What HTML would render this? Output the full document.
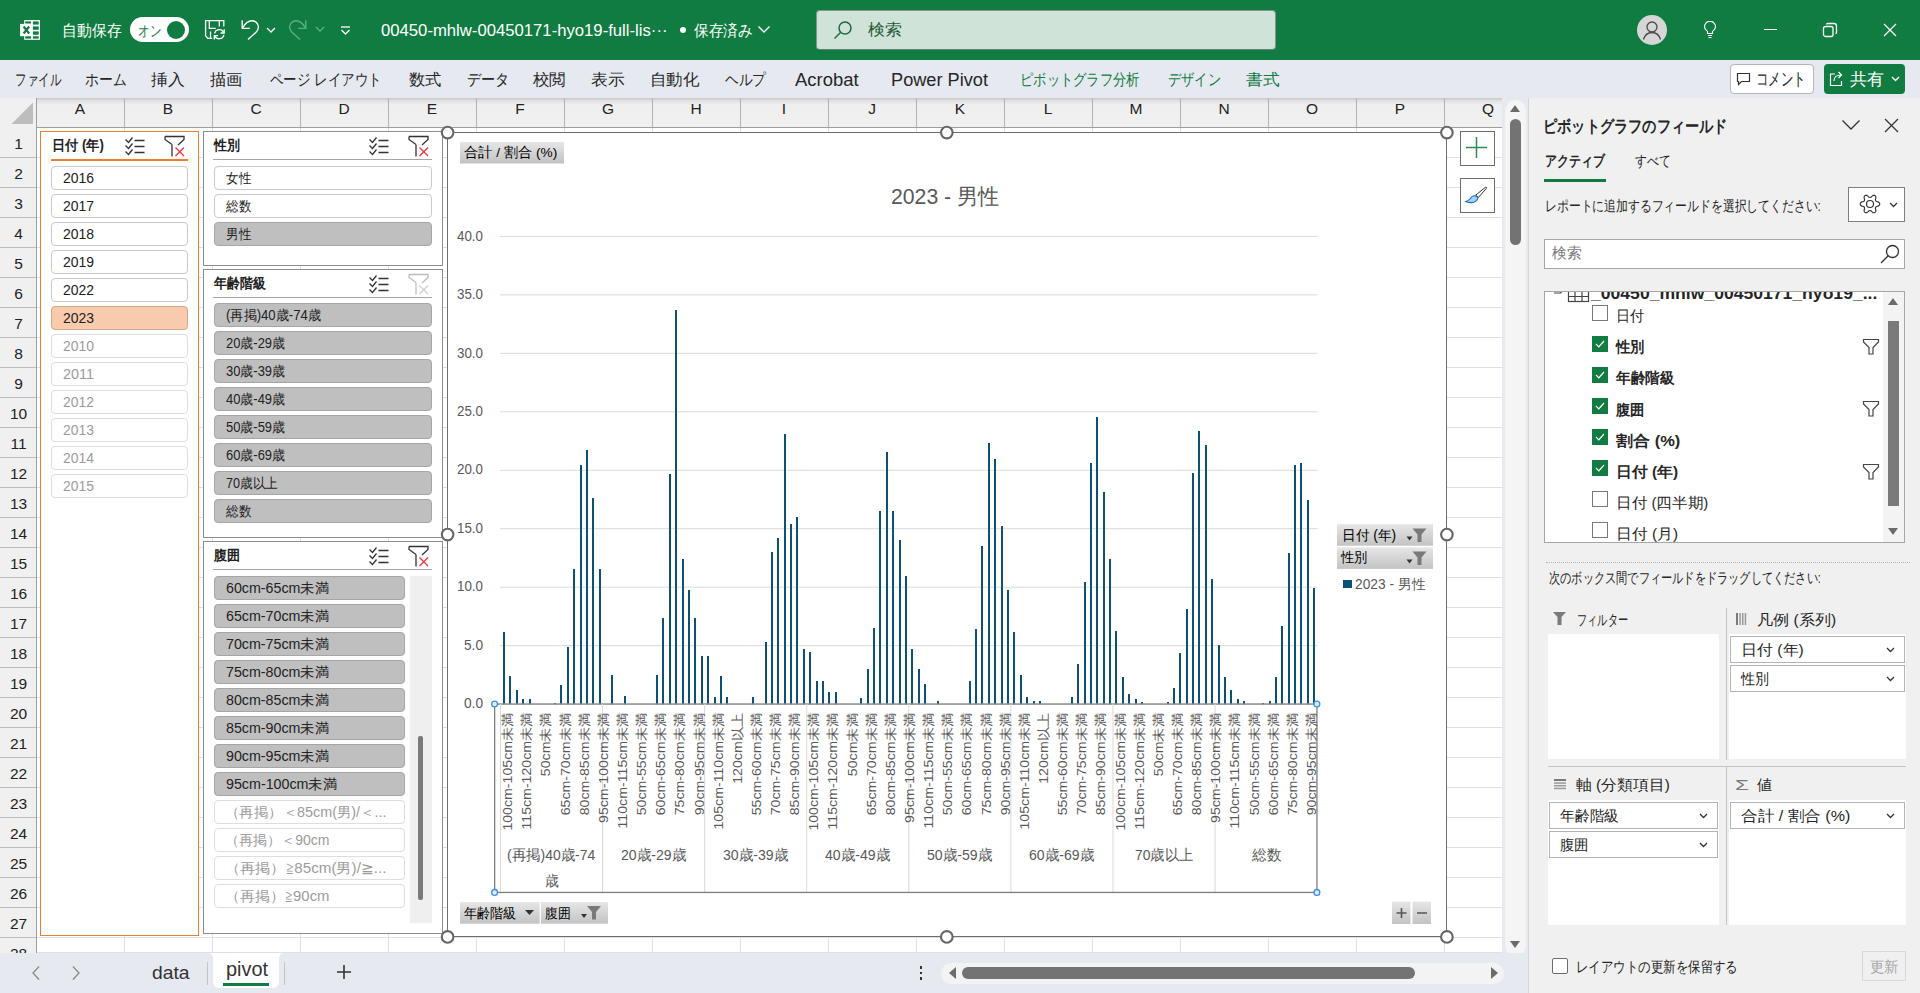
<!DOCTYPE html><html><head><meta charset="utf-8"><style>
*{margin:0;padding:0;box-sizing:border-box}
html,body{width:1920px;height:993px;overflow:hidden;background:#fff;font-family:"Liberation Sans",sans-serif;color:#222}
.ab{position:absolute}
.t{position:absolute;white-space:nowrap;line-height:1;transform-origin:0 50%}
</style></head><body>

<div class="ab" style="left:0;top:0;width:1920px;height:60px;background:#107c41"></div>
<svg class="ab" style="left:16px;top:16px" width="28" height="28" viewBox="0 0 28 28">
<rect x="8.2" y="4.1" width="15.8" height="19.7" fill="#fff"/>
<rect x="4.1" y="7.9" width="12" height="12.3" fill="#fff"/>
<g fill="#107c41"><rect x="16.9" y="5.4" width="5.8" height="3.2"/><rect x="16.9" y="10.4" width="5.8" height="3.4"/><rect x="16.9" y="15.4" width="5.8" height="3.35"/><rect x="16.9" y="20.3" width="5.8" height="2.3"/>
<rect x="9.2" y="5.4" width="5.8" height="2.1"/><rect x="9.2" y="20.3" width="5.8" height="2.3"/></g>
<path d="M7.6 10.5l5.6 7M13.2 10.5l-5.6 7" stroke="#107c41" stroke-width="2.1"/>
</svg>
<div class="t" style="left:61.50px;top:22.78px;font-size:16px;color:#fff;font-weight:normal;transform:scaleX(0.9297)">自動保存</div>
<div class="ab" style="left:130px;top:17px;width:59px;height:25px;border-radius:13px;background:#fff"></div>
<div class="t" style="left:137.50px;top:23.45px;font-size:15px;color:#107c41;font-weight:normal;transform:scaleX(0.7667)">オン</div>
<div class="ab" style="left:167px;top:21px;width:18px;height:18px;border-radius:50%;background:#107c41"></div>
<svg class="ab" style="left:204px;top:19px" width="24" height="24" viewBox="0 0 24 24" fill="none" stroke="#fff" stroke-width="1.3">
<path d="M1.6 10V1.6H19.8V7.5"/><path d="M1.6 9V16.8L3.8 19.4H8.2"/><path d="M5.3 2V9.3H11.8"/><path d="M15.3 2V7.5"/><path d="M6.5 12.5V19"/>
<path d="M10.6 14.4A4.8 4.8 0 0 1 19.6 13.2"/><path d="M20.2 10.2V14H16.6"/>
<path d="M19.9 15.8A4.8 4.8 0 0 1 10.8 16.9"/><path d="M10.3 20.6V16.6H13.9"/>
</svg>
<svg class="ab" style="left:239px;top:19px" width="22" height="23" viewBox="0 0 22 23" fill="none" stroke="#fff" stroke-width="1.4">
<path d="M3.2 1.2V9.4H10.8"/><path d="M3.6 9C6 4.5 9.5 1.8 13 1.8C16.8 1.8 19.4 4.8 19.4 8C19.4 10.2 18.5 11.8 17 13.3L9 20.5"/>
</svg>
<svg class="ab" style="left:266px;top:26.5px" width="10" height="7" viewBox="0 0 10 7" fill="none" stroke="#fff" stroke-width="1.3"><path d="M1 1l4 4 4-4"/></svg>
<svg class="ab" style="left:287px;top:19px" width="22" height="23" viewBox="0 0 22 23" fill="none" stroke="#5fae83" stroke-width="1.4">
<path d="M18.8 1.2V9.4H11.2"/><path d="M18.4 9C16 4.5 12.5 1.8 9 1.8C5.2 1.8 2.6 4.8 2.6 8C2.6 10.2 3.5 11.8 5 13.3L13 20.5"/>
</svg>
<svg class="ab" style="left:315px;top:26px" width="10" height="7" viewBox="0 0 10 7" fill="none" stroke="#5fae83" stroke-width="1.3"><path d="M1 1l4 4 4-4"/></svg>
<svg class="ab" style="left:340px;top:26px" width="11" height="10" viewBox="0 0 11 10" fill="none" stroke="#fff" stroke-width="1.3"><path d="M1 1h9"/><path d="M1.5 4l4 4 4-4"/></svg>
<div class="t" style="left:380.50px;top:22.98px;font-size:16px;color:#fff;font-weight:normal;transform:scaleX(1.0426)">00450-mhlw-00450171-hyo19-full-lis···</div>
<div class="ab" style="left:680px;top:27px;width:6px;height:6px;border-radius:50%;background:#fff"></div>
<div class="t" style="left:694.00px;top:22.98px;font-size:16px;color:#fff;font-weight:normal;transform:scaleX(0.9141)">保存済み</div>
<svg class="ab" style="left:757px;top:25px" width="14" height="9" viewBox="0 0 14 9" fill="none" stroke="#fff" stroke-width="1.4"><path d="M1.5 1.5l5.5 5.5 5.5-5.5"/></svg>
<div class="ab" style="left:816px;top:10px;width:460px;height:40px;border-radius:4px;background:#d0e3d8;border:1px solid #84968b;border-bottom:1.5px solid #6a7d72"></div>
<svg class="ab" style="left:833px;top:20px" width="20" height="20" viewBox="0 0 20 20" fill="none" stroke="#1c6b3f" stroke-width="1.5"><circle cx="12" cy="8" r="6"/><path d="M7.5 12.5L1.5 18.5"/></svg>
<div class="t" style="left:867.50px;top:22.48px;font-size:16px;color:#1d5a37;font-weight:normal;transform:scaleX(1.0625)">検索</div>
<div class="ab" style="left:1637px;top:15px;width:30px;height:30px;border-radius:50%;background:#d6d6d6"></div>
<svg class="ab" style="left:1637px;top:15px" width="30" height="30" viewBox="0 0 30 30" fill="none" stroke="#4a4a4a" stroke-width="1.3"><circle cx="15" cy="12" r="5"/><path d="M6.5 24.5c1.5-5 5-7 8.5-7s7 2 8.5 7"/></svg>
<svg class="ab" style="left:1703px;top:21px" width="14" height="18" viewBox="0 0 14 18" fill="none" stroke="#fff" stroke-width="1.2"><path d="M4.5 12.5v-2C2.5 9 1.5 7.5 1.5 5.8a5.5 5.5 0 0 1 11 0c0 1.7-1 3.2-3 4.7v2z"/><path d="M5 14.5h4M5.5 16.5h3"/></svg>
<div class="ab" style="left:1764px;top:29px;width:13px;height:1.4px;background:#fff"></div>
<svg class="ab" style="left:1822px;top:22px" width="16" height="16" viewBox="0 0 16 16" fill="none" stroke="#fff" stroke-width="1.3"><rect x="1.5" y="4.5" width="9.5" height="10" rx="2"/><path d="M4.5 2.5c0-.6.5-1 1-1h6.5c1.3 0 2.5 1.2 2.5 2.5v6.5c0 .6-.4 1-1 1"/></svg>
<svg class="ab" style="left:1883px;top:23px" width="14" height="14" viewBox="0 0 14 14" fill="none" stroke="#fff" stroke-width="1.3"><path d="M1 1l12 12M13 1L1 13"/></svg>
<div class="ab" style="left:0;top:60px;width:1920px;height:38px;background:#e6e9ef"></div>
<div class="t" style="left:15.00px;top:72.28px;font-size:16px;color:#262626;font-weight:normal;transform:scaleX(0.7188)">ファイル</div>
<div class="t" style="left:85.00px;top:72.28px;font-size:16px;color:#262626;font-weight:normal;transform:scaleX(0.8646)">ホーム</div>
<div class="t" style="left:151.00px;top:72.28px;font-size:16px;color:#262626;font-weight:normal;transform:scaleX(1.0469)">挿入</div>
<div class="t" style="left:210.00px;top:72.28px;font-size:16px;color:#262626;font-weight:normal;transform:scaleX(1.0156)">描画</div>
<div class="t" style="left:270.00px;top:72.28px;font-size:16px;color:#262626;font-weight:normal;transform:scaleX(0.8418)">ページ レイアウト</div>
<div class="t" style="left:409.00px;top:72.28px;font-size:16px;color:#262626;font-weight:normal;transform:scaleX(1.0156)">数式</div>
<div class="t" style="left:467.00px;top:72.28px;font-size:16px;color:#262626;font-weight:normal;transform:scaleX(0.8854)">データ</div>
<div class="t" style="left:533.00px;top:72.28px;font-size:16px;color:#262626;font-weight:normal;transform:scaleX(1.0312)">校閲</div>
<div class="t" style="left:591.00px;top:72.28px;font-size:16px;color:#262626;font-weight:normal;transform:scaleX(1.0469)">表示</div>
<div class="t" style="left:650.00px;top:72.28px;font-size:16px;color:#262626;font-weight:normal;transform:scaleX(1.0312)">自動化</div>
<div class="t" style="left:725.00px;top:72.28px;font-size:16px;color:#262626;font-weight:normal;transform:scaleX(0.8542)">ヘルプ</div>
<div class="t" style="left:794.50px;top:72.28px;font-size:17.5px;color:#262626;font-weight:normal;transform:scaleX(1.0528)">Acrobat</div>
<div class="t" style="left:891.00px;top:72.28px;font-size:17.5px;color:#262626;font-weight:normal;transform:scaleX(1.0388)">Power Pivot</div>
<div class="t" style="left:1019.50px;top:72.28px;font-size:16px;color:#107c41;font-weight:normal;transform:scaleX(0.8299)">ピボットグラフ分析</div>
<div class="t" style="left:1167.50px;top:72.28px;font-size:16px;color:#107c41;font-weight:normal;transform:scaleX(0.8281)">デザイン</div>
<div class="t" style="left:1246.00px;top:72.28px;font-size:16px;color:#107c41;font-weight:normal;transform:scaleX(1.0469)">書式</div>
<div class="ab" style="left:1730px;top:64px;width:84px;height:30px;border:1px solid #b5b5b5;border-radius:4px;background:#fff"></div>
<svg class="ab" style="left:1736px;top:72px" width="15" height="15" viewBox="0 0 15 15" fill="none" stroke="#333" stroke-width="1.2"><path d="M1.5 1.5h12v8h-8l-3 3v-3h-1z"/></svg>
<div class="t" style="left:1755.50px;top:71.28px;font-size:17.5px;color:#262626;font-weight:normal;transform:scaleX(0.6944)">コメント</div>
<div class="ab" style="left:1824px;top:64px;width:81px;height:30px;border-radius:4px;background:#107c41"></div>
<svg class="ab" style="left:1829px;top:70px" width="16" height="17" viewBox="0 0 16 17" fill="none" stroke="#fff" stroke-width="1.2"><path d="M6 4H1.5v11.5h11V11"/><path d="M5 11c0-4 3-6 7-6M9.5 2l3 3-3 3"/></svg>
<div class="t" style="left:1850.00px;top:71.01px;font-size:17px;color:#fff;font-weight:normal;transform:scaleX(1.0000)">共有</div>
<svg class="ab" style="left:1891px;top:76px" width="9" height="6" viewBox="0 0 9 6" fill="none" stroke="#fff" stroke-width="1.3"><path d="M1 1l3.5 3.5L8 1"/></svg>
<div class="ab" style="left:0;top:98px;width:1502px;height:855px;background:#fff"></div>
<div class="ab" style="left:0;top:98px;width:1502px;height:30px;background:linear-gradient(#c9c9c9 0px,#e3e3e3 3px,#efefef 7px,#f0f0f0 100%)"></div>
<div class="ab" style="left:0;top:127px;width:1502px;height:1px;background:#9e9e9e"></div>
<div class="ab" style="left:0;top:98px;width:37px;height:855px;background:#f0f0f0"></div>
<div class="ab" style="left:36px;top:98px;width:1px;height:855px;background:#9e9e9e"></div>
<svg class="ab" style="left:10px;top:101px" width="24" height="24" viewBox="0 0 24 24"><path d="M23 1.5V23H1.5z" fill="#bdbdbd"/></svg>
<div class="ab" style="left:124px;top:128px;width:1px;height:825px;background:#e0e0e0"></div>
<div class="ab" style="left:124px;top:98px;width:1px;height:29px;background:#b3b3b3"></div>
<div class="t" style="left:36px;width:88px;text-align:center;top:101px;font-size:15.5px;line-height:15px;color:#222">A</div>
<div class="ab" style="left:212px;top:128px;width:1px;height:825px;background:#e0e0e0"></div>
<div class="ab" style="left:212px;top:98px;width:1px;height:29px;background:#b3b3b3"></div>
<div class="t" style="left:124px;width:88px;text-align:center;top:101px;font-size:15.5px;line-height:15px;color:#222">B</div>
<div class="ab" style="left:300px;top:128px;width:1px;height:825px;background:#e0e0e0"></div>
<div class="ab" style="left:300px;top:98px;width:1px;height:29px;background:#b3b3b3"></div>
<div class="t" style="left:212px;width:88px;text-align:center;top:101px;font-size:15.5px;line-height:15px;color:#222">C</div>
<div class="ab" style="left:388px;top:128px;width:1px;height:825px;background:#e0e0e0"></div>
<div class="ab" style="left:388px;top:98px;width:1px;height:29px;background:#b3b3b3"></div>
<div class="t" style="left:300px;width:88px;text-align:center;top:101px;font-size:15.5px;line-height:15px;color:#222">D</div>
<div class="ab" style="left:476px;top:128px;width:1px;height:825px;background:#e0e0e0"></div>
<div class="ab" style="left:476px;top:98px;width:1px;height:29px;background:#b3b3b3"></div>
<div class="t" style="left:388px;width:88px;text-align:center;top:101px;font-size:15.5px;line-height:15px;color:#222">E</div>
<div class="ab" style="left:564px;top:128px;width:1px;height:825px;background:#e0e0e0"></div>
<div class="ab" style="left:564px;top:98px;width:1px;height:29px;background:#b3b3b3"></div>
<div class="t" style="left:476px;width:88px;text-align:center;top:101px;font-size:15.5px;line-height:15px;color:#222">F</div>
<div class="ab" style="left:652px;top:128px;width:1px;height:825px;background:#e0e0e0"></div>
<div class="ab" style="left:652px;top:98px;width:1px;height:29px;background:#b3b3b3"></div>
<div class="t" style="left:564px;width:88px;text-align:center;top:101px;font-size:15.5px;line-height:15px;color:#222">G</div>
<div class="ab" style="left:740px;top:128px;width:1px;height:825px;background:#e0e0e0"></div>
<div class="ab" style="left:740px;top:98px;width:1px;height:29px;background:#b3b3b3"></div>
<div class="t" style="left:652px;width:88px;text-align:center;top:101px;font-size:15.5px;line-height:15px;color:#222">H</div>
<div class="ab" style="left:828px;top:128px;width:1px;height:825px;background:#e0e0e0"></div>
<div class="ab" style="left:828px;top:98px;width:1px;height:29px;background:#b3b3b3"></div>
<div class="t" style="left:740px;width:88px;text-align:center;top:101px;font-size:15.5px;line-height:15px;color:#222">I</div>
<div class="ab" style="left:916px;top:128px;width:1px;height:825px;background:#e0e0e0"></div>
<div class="ab" style="left:916px;top:98px;width:1px;height:29px;background:#b3b3b3"></div>
<div class="t" style="left:828px;width:88px;text-align:center;top:101px;font-size:15.5px;line-height:15px;color:#222">J</div>
<div class="ab" style="left:1004px;top:128px;width:1px;height:825px;background:#e0e0e0"></div>
<div class="ab" style="left:1004px;top:98px;width:1px;height:29px;background:#b3b3b3"></div>
<div class="t" style="left:916px;width:88px;text-align:center;top:101px;font-size:15.5px;line-height:15px;color:#222">K</div>
<div class="ab" style="left:1092px;top:128px;width:1px;height:825px;background:#e0e0e0"></div>
<div class="ab" style="left:1092px;top:98px;width:1px;height:29px;background:#b3b3b3"></div>
<div class="t" style="left:1004px;width:88px;text-align:center;top:101px;font-size:15.5px;line-height:15px;color:#222">L</div>
<div class="ab" style="left:1180px;top:128px;width:1px;height:825px;background:#e0e0e0"></div>
<div class="ab" style="left:1180px;top:98px;width:1px;height:29px;background:#b3b3b3"></div>
<div class="t" style="left:1092px;width:88px;text-align:center;top:101px;font-size:15.5px;line-height:15px;color:#222">M</div>
<div class="ab" style="left:1268px;top:128px;width:1px;height:825px;background:#e0e0e0"></div>
<div class="ab" style="left:1268px;top:98px;width:1px;height:29px;background:#b3b3b3"></div>
<div class="t" style="left:1180px;width:88px;text-align:center;top:101px;font-size:15.5px;line-height:15px;color:#222">N</div>
<div class="ab" style="left:1356px;top:128px;width:1px;height:825px;background:#e0e0e0"></div>
<div class="ab" style="left:1356px;top:98px;width:1px;height:29px;background:#b3b3b3"></div>
<div class="t" style="left:1268px;width:88px;text-align:center;top:101px;font-size:15.5px;line-height:15px;color:#222">O</div>
<div class="ab" style="left:1444px;top:128px;width:1px;height:825px;background:#e0e0e0"></div>
<div class="ab" style="left:1444px;top:98px;width:1px;height:29px;background:#b3b3b3"></div>
<div class="t" style="left:1356px;width:88px;text-align:center;top:101px;font-size:15.5px;line-height:15px;color:#222">P</div>
<div class="ab" style="left:1532px;top:128px;width:1px;height:825px;background:#e0e0e0"></div>
<div class="ab" style="left:1532px;top:98px;width:1px;height:29px;background:#b3b3b3"></div>
<div class="t" style="left:1444px;width:88px;text-align:center;top:101px;font-size:15.5px;line-height:15px;color:#222">Q</div>
<div class="ab" style="left:37px;top:157px;width:1465px;height:1px;background:#e0e0e0"></div>
<div class="ab" style="left:0;top:157px;width:36px;height:1px;background:#bdbdbd"></div>
<div class="t" style="left:0;width:37px;text-align:center;top:136px;font-size:15.5px;line-height:15px;color:#222">1</div>
<div class="ab" style="left:37px;top:187px;width:1465px;height:1px;background:#e0e0e0"></div>
<div class="ab" style="left:0;top:187px;width:36px;height:1px;background:#bdbdbd"></div>
<div class="t" style="left:0;width:37px;text-align:center;top:166px;font-size:15.5px;line-height:15px;color:#222">2</div>
<div class="ab" style="left:37px;top:217px;width:1465px;height:1px;background:#e0e0e0"></div>
<div class="ab" style="left:0;top:217px;width:36px;height:1px;background:#bdbdbd"></div>
<div class="t" style="left:0;width:37px;text-align:center;top:196px;font-size:15.5px;line-height:15px;color:#222">3</div>
<div class="ab" style="left:37px;top:247px;width:1465px;height:1px;background:#e0e0e0"></div>
<div class="ab" style="left:0;top:247px;width:36px;height:1px;background:#bdbdbd"></div>
<div class="t" style="left:0;width:37px;text-align:center;top:226px;font-size:15.5px;line-height:15px;color:#222">4</div>
<div class="ab" style="left:37px;top:277px;width:1465px;height:1px;background:#e0e0e0"></div>
<div class="ab" style="left:0;top:277px;width:36px;height:1px;background:#bdbdbd"></div>
<div class="t" style="left:0;width:37px;text-align:center;top:256px;font-size:15.5px;line-height:15px;color:#222">5</div>
<div class="ab" style="left:37px;top:307px;width:1465px;height:1px;background:#e0e0e0"></div>
<div class="ab" style="left:0;top:307px;width:36px;height:1px;background:#bdbdbd"></div>
<div class="t" style="left:0;width:37px;text-align:center;top:286px;font-size:15.5px;line-height:15px;color:#222">6</div>
<div class="ab" style="left:37px;top:337px;width:1465px;height:1px;background:#e0e0e0"></div>
<div class="ab" style="left:0;top:337px;width:36px;height:1px;background:#bdbdbd"></div>
<div class="t" style="left:0;width:37px;text-align:center;top:316px;font-size:15.5px;line-height:15px;color:#222">7</div>
<div class="ab" style="left:37px;top:367px;width:1465px;height:1px;background:#e0e0e0"></div>
<div class="ab" style="left:0;top:367px;width:36px;height:1px;background:#bdbdbd"></div>
<div class="t" style="left:0;width:37px;text-align:center;top:346px;font-size:15.5px;line-height:15px;color:#222">8</div>
<div class="ab" style="left:37px;top:397px;width:1465px;height:1px;background:#e0e0e0"></div>
<div class="ab" style="left:0;top:397px;width:36px;height:1px;background:#bdbdbd"></div>
<div class="t" style="left:0;width:37px;text-align:center;top:376px;font-size:15.5px;line-height:15px;color:#222">9</div>
<div class="ab" style="left:37px;top:427px;width:1465px;height:1px;background:#e0e0e0"></div>
<div class="ab" style="left:0;top:427px;width:36px;height:1px;background:#bdbdbd"></div>
<div class="t" style="left:0;width:37px;text-align:center;top:406px;font-size:15.5px;line-height:15px;color:#222">10</div>
<div class="ab" style="left:37px;top:457px;width:1465px;height:1px;background:#e0e0e0"></div>
<div class="ab" style="left:0;top:457px;width:36px;height:1px;background:#bdbdbd"></div>
<div class="t" style="left:0;width:37px;text-align:center;top:436px;font-size:15.5px;line-height:15px;color:#222">11</div>
<div class="ab" style="left:37px;top:487px;width:1465px;height:1px;background:#e0e0e0"></div>
<div class="ab" style="left:0;top:487px;width:36px;height:1px;background:#bdbdbd"></div>
<div class="t" style="left:0;width:37px;text-align:center;top:466px;font-size:15.5px;line-height:15px;color:#222">12</div>
<div class="ab" style="left:37px;top:517px;width:1465px;height:1px;background:#e0e0e0"></div>
<div class="ab" style="left:0;top:517px;width:36px;height:1px;background:#bdbdbd"></div>
<div class="t" style="left:0;width:37px;text-align:center;top:496px;font-size:15.5px;line-height:15px;color:#222">13</div>
<div class="ab" style="left:37px;top:547px;width:1465px;height:1px;background:#e0e0e0"></div>
<div class="ab" style="left:0;top:547px;width:36px;height:1px;background:#bdbdbd"></div>
<div class="t" style="left:0;width:37px;text-align:center;top:526px;font-size:15.5px;line-height:15px;color:#222">14</div>
<div class="ab" style="left:37px;top:577px;width:1465px;height:1px;background:#e0e0e0"></div>
<div class="ab" style="left:0;top:577px;width:36px;height:1px;background:#bdbdbd"></div>
<div class="t" style="left:0;width:37px;text-align:center;top:556px;font-size:15.5px;line-height:15px;color:#222">15</div>
<div class="ab" style="left:37px;top:607px;width:1465px;height:1px;background:#e0e0e0"></div>
<div class="ab" style="left:0;top:607px;width:36px;height:1px;background:#bdbdbd"></div>
<div class="t" style="left:0;width:37px;text-align:center;top:586px;font-size:15.5px;line-height:15px;color:#222">16</div>
<div class="ab" style="left:37px;top:637px;width:1465px;height:1px;background:#e0e0e0"></div>
<div class="ab" style="left:0;top:637px;width:36px;height:1px;background:#bdbdbd"></div>
<div class="t" style="left:0;width:37px;text-align:center;top:616px;font-size:15.5px;line-height:15px;color:#222">17</div>
<div class="ab" style="left:37px;top:667px;width:1465px;height:1px;background:#e0e0e0"></div>
<div class="ab" style="left:0;top:667px;width:36px;height:1px;background:#bdbdbd"></div>
<div class="t" style="left:0;width:37px;text-align:center;top:646px;font-size:15.5px;line-height:15px;color:#222">18</div>
<div class="ab" style="left:37px;top:697px;width:1465px;height:1px;background:#e0e0e0"></div>
<div class="ab" style="left:0;top:697px;width:36px;height:1px;background:#bdbdbd"></div>
<div class="t" style="left:0;width:37px;text-align:center;top:676px;font-size:15.5px;line-height:15px;color:#222">19</div>
<div class="ab" style="left:37px;top:727px;width:1465px;height:1px;background:#e0e0e0"></div>
<div class="ab" style="left:0;top:727px;width:36px;height:1px;background:#bdbdbd"></div>
<div class="t" style="left:0;width:37px;text-align:center;top:706px;font-size:15.5px;line-height:15px;color:#222">20</div>
<div class="ab" style="left:37px;top:757px;width:1465px;height:1px;background:#e0e0e0"></div>
<div class="ab" style="left:0;top:757px;width:36px;height:1px;background:#bdbdbd"></div>
<div class="t" style="left:0;width:37px;text-align:center;top:736px;font-size:15.5px;line-height:15px;color:#222">21</div>
<div class="ab" style="left:37px;top:787px;width:1465px;height:1px;background:#e0e0e0"></div>
<div class="ab" style="left:0;top:787px;width:36px;height:1px;background:#bdbdbd"></div>
<div class="t" style="left:0;width:37px;text-align:center;top:766px;font-size:15.5px;line-height:15px;color:#222">22</div>
<div class="ab" style="left:37px;top:817px;width:1465px;height:1px;background:#e0e0e0"></div>
<div class="ab" style="left:0;top:817px;width:36px;height:1px;background:#bdbdbd"></div>
<div class="t" style="left:0;width:37px;text-align:center;top:796px;font-size:15.5px;line-height:15px;color:#222">23</div>
<div class="ab" style="left:37px;top:847px;width:1465px;height:1px;background:#e0e0e0"></div>
<div class="ab" style="left:0;top:847px;width:36px;height:1px;background:#bdbdbd"></div>
<div class="t" style="left:0;width:37px;text-align:center;top:826px;font-size:15.5px;line-height:15px;color:#222">24</div>
<div class="ab" style="left:37px;top:877px;width:1465px;height:1px;background:#e0e0e0"></div>
<div class="ab" style="left:0;top:877px;width:36px;height:1px;background:#bdbdbd"></div>
<div class="t" style="left:0;width:37px;text-align:center;top:856px;font-size:15.5px;line-height:15px;color:#222">25</div>
<div class="ab" style="left:37px;top:907px;width:1465px;height:1px;background:#e0e0e0"></div>
<div class="ab" style="left:0;top:907px;width:36px;height:1px;background:#bdbdbd"></div>
<div class="t" style="left:0;width:37px;text-align:center;top:886px;font-size:15.5px;line-height:15px;color:#222">26</div>
<div class="ab" style="left:37px;top:937px;width:1465px;height:1px;background:#e0e0e0"></div>
<div class="ab" style="left:0;top:937px;width:36px;height:1px;background:#bdbdbd"></div>
<div class="t" style="left:0;width:37px;text-align:center;top:916px;font-size:15.5px;line-height:15px;color:#222">27</div>
<div class="t" style="left:0;width:37px;text-align:center;top:946px;font-size:15.5px;line-height:15px;color:#222">28</div>
<div class="ab" style="left:40px;top:131px;width:159px;height:805px;background:#fff;border:1.5px solid #ed7d31"></div>
<div class="t" style="left:51.50px;top:138.42px;font-size:14px;color:#222;font-weight:bold;transform:scaleX(0.9417)">日付 (年)</div>
<svg class="ab" style="left:124px;top:136px" width="22" height="20" viewBox="0 0 22 20" fill="none" stroke="#333" stroke-width="1.3">
<path d="M1.5 3.5l3 3 4-5M1.5 9.5l3 3 4-5M1.5 15.5l3 3 4-5"/><path d="M10.5 4.5h10M10.5 10.5h10M10.5 16.5h10"/></svg>
<svg class="ab" style="left:162.5px;top:134px" width="24" height="24" viewBox="0 0 24 24" fill="none" stroke-width="1.3">
<path d="M2 2.5h19v3l-6 5.5M9 10.5v12" stroke="#333"/><path d="M2 2.5v3l7 5" stroke="#333"/><path d="M12.5 13.5l8.5 8.5M21 13.5l-8.5 8.5" stroke="#e8383d"/></svg>
<div class="ab" style="left:51px;top:159px;width:137px;height:1.6px;background:#ed7d31"></div>
<div class="ab" style="left:51px;top:166px;width:137px;height:24px;border-radius:4px;background:#fff;border:1px solid #cacaca"></div>
<div class="t" style="left:62.50px;top:171.42px;font-size:14px;color:#222;font-weight:normal;transform:scaleX(0.9950)">2016</div>
<div class="ab" style="left:51px;top:194px;width:137px;height:24px;border-radius:4px;background:#fff;border:1px solid #cacaca"></div>
<div class="t" style="left:62.50px;top:199.42px;font-size:14px;color:#222;font-weight:normal;transform:scaleX(0.9950)">2017</div>
<div class="ab" style="left:51px;top:222px;width:137px;height:24px;border-radius:4px;background:#fff;border:1px solid #cacaca"></div>
<div class="t" style="left:62.50px;top:227.42px;font-size:14px;color:#222;font-weight:normal;transform:scaleX(0.9950)">2018</div>
<div class="ab" style="left:51px;top:250px;width:137px;height:24px;border-radius:4px;background:#fff;border:1px solid #cacaca"></div>
<div class="t" style="left:62.50px;top:255.42px;font-size:14px;color:#222;font-weight:normal;transform:scaleX(0.9950)">2019</div>
<div class="ab" style="left:51px;top:278px;width:137px;height:24px;border-radius:4px;background:#fff;border:1px solid #cacaca"></div>
<div class="t" style="left:62.50px;top:283.42px;font-size:14px;color:#222;font-weight:normal;transform:scaleX(0.9950)">2022</div>
<div class="ab" style="left:51px;top:306px;width:137px;height:24px;border-radius:4px;background:#f8cbad;border:1px solid #d4a88a"></div>
<div class="t" style="left:62.50px;top:311.42px;font-size:14px;color:#222;font-weight:normal;transform:scaleX(0.9950)">2023</div>
<div class="ab" style="left:51px;top:334px;width:137px;height:24px;border-radius:4px;background:#fff;border:1px solid #dedede"></div>
<div class="t" style="left:62.50px;top:339.42px;font-size:14px;color:#9b9b9b;font-weight:normal;transform:scaleX(0.9950)">2010</div>
<div class="ab" style="left:51px;top:362px;width:137px;height:24px;border-radius:4px;background:#fff;border:1px solid #dedede"></div>
<div class="t" style="left:62.50px;top:367.42px;font-size:14px;color:#9b9b9b;font-weight:normal;transform:scaleX(1.0296)">2011</div>
<div class="ab" style="left:51px;top:390px;width:137px;height:24px;border-radius:4px;background:#fff;border:1px solid #dedede"></div>
<div class="t" style="left:62.50px;top:395.42px;font-size:14px;color:#9b9b9b;font-weight:normal;transform:scaleX(0.9950)">2012</div>
<div class="ab" style="left:51px;top:418px;width:137px;height:24px;border-radius:4px;background:#fff;border:1px solid #dedede"></div>
<div class="t" style="left:62.50px;top:423.42px;font-size:14px;color:#9b9b9b;font-weight:normal;transform:scaleX(0.9950)">2013</div>
<div class="ab" style="left:51px;top:446px;width:137px;height:24px;border-radius:4px;background:#fff;border:1px solid #dedede"></div>
<div class="t" style="left:62.50px;top:451.42px;font-size:14px;color:#9b9b9b;font-weight:normal;transform:scaleX(0.9950)">2014</div>
<div class="ab" style="left:51px;top:474px;width:137px;height:24px;border-radius:4px;background:#fff;border:1px solid #dedede"></div>
<div class="t" style="left:62.50px;top:479.42px;font-size:14px;color:#9b9b9b;font-weight:normal;transform:scaleX(0.9950)">2015</div>
<div class="ab" style="left:203px;top:131px;width:240px;height:135px;background:#fff;border:1.3px solid #8c8c8c"></div>
<div class="t" style="left:213.50px;top:138.42px;font-size:14px;color:#222;font-weight:bold;transform:scaleX(0.9286)">性別</div>
<svg class="ab" style="left:368px;top:136px" width="22" height="20" viewBox="0 0 22 20" fill="none" stroke="#333" stroke-width="1.3">
<path d="M1.5 3.5l3 3 4-5M1.5 9.5l3 3 4-5M1.5 15.5l3 3 4-5"/><path d="M10.5 4.5h10M10.5 10.5h10M10.5 16.5h10"/></svg>
<svg class="ab" style="left:406.5px;top:134px" width="24" height="24" viewBox="0 0 24 24" fill="none" stroke-width="1.3">
<path d="M2 2.5h19v3l-6 5.5M9 10.5v12" stroke="#333"/><path d="M2 2.5v3l7 5" stroke="#333"/><path d="M12.5 13.5l8.5 8.5M21 13.5l-8.5 8.5" stroke="#e8383d"/></svg>
<div class="ab" style="left:213px;top:159px;width:219px;height:1.2px;background:#a6a6a6"></div>
<div class="ab" style="left:214px;top:166px;width:218px;height:24px;border-radius:4px;background:#fff;border:1px solid #cacaca"></div>
<div class="t" style="left:225.50px;top:171.42px;font-size:14px;color:#222;font-weight:normal;transform:scaleX(0.8929)">女性</div>
<div class="ab" style="left:214px;top:194px;width:218px;height:24px;border-radius:4px;background:#fff;border:1px solid #cacaca"></div>
<div class="t" style="left:225.50px;top:199.42px;font-size:14px;color:#222;font-weight:normal;transform:scaleX(0.8929)">総数</div>
<div class="ab" style="left:214px;top:222px;width:218px;height:24px;border-radius:4px;background:#bfbfbf;border:1px solid #a6a6a6"></div>
<div class="t" style="left:225.50px;top:227.42px;font-size:14px;color:#222;font-weight:normal;transform:scaleX(0.8929)">男性</div>
<div class="ab" style="left:203px;top:269px;width:240px;height:269px;background:#fff;border:1.3px solid #8c8c8c"></div>
<div class="t" style="left:213.50px;top:276.42px;font-size:14px;color:#222;font-weight:bold;transform:scaleX(0.9286)">年齢階級</div>
<svg class="ab" style="left:368px;top:274px" width="22" height="20" viewBox="0 0 22 20" fill="none" stroke="#333" stroke-width="1.3">
<path d="M1.5 3.5l3 3 4-5M1.5 9.5l3 3 4-5M1.5 15.5l3 3 4-5"/><path d="M10.5 4.5h10M10.5 10.5h10M10.5 16.5h10"/></svg>
<svg class="ab" style="left:406.5px;top:272px" width="24" height="24" viewBox="0 0 24 24" fill="none" stroke-width="1.3">
<path d="M2 2.5h19v3l-6 5.5M9 10.5v12" stroke="#bdbdbd"/><path d="M2 2.5v3l7 5" stroke="#bdbdbd"/><path d="M12.5 13.5l8.5 8.5M21 13.5l-8.5 8.5" stroke="#cfcfcf"/></svg>
<div class="ab" style="left:213px;top:297px;width:219px;height:1.2px;background:#a6a6a6"></div>
<div class="ab" style="left:214px;top:303px;width:218px;height:24px;border-radius:4px;background:#bfbfbf;border:1px solid #a6a6a6"></div>
<div class="t" style="left:225.50px;top:308.42px;font-size:14px;color:#222;font-weight:normal;transform:scaleX(0.9393)">(再掲)40歳-74歳</div>
<div class="ab" style="left:214px;top:331px;width:218px;height:24px;border-radius:4px;background:#bfbfbf;border:1px solid #a6a6a6"></div>
<div class="t" style="left:225.50px;top:336.42px;font-size:14px;color:#222;font-weight:normal;transform:scaleX(0.9246)">20歳-29歳</div>
<div class="ab" style="left:214px;top:359px;width:218px;height:24px;border-radius:4px;background:#bfbfbf;border:1px solid #a6a6a6"></div>
<div class="t" style="left:225.50px;top:364.42px;font-size:14px;color:#222;font-weight:normal;transform:scaleX(0.9246)">30歳-39歳</div>
<div class="ab" style="left:214px;top:387px;width:218px;height:24px;border-radius:4px;background:#bfbfbf;border:1px solid #a6a6a6"></div>
<div class="t" style="left:225.50px;top:392.42px;font-size:14px;color:#222;font-weight:normal;transform:scaleX(0.9246)">40歳-49歳</div>
<div class="ab" style="left:214px;top:415px;width:218px;height:24px;border-radius:4px;background:#bfbfbf;border:1px solid #a6a6a6"></div>
<div class="t" style="left:225.50px;top:420.42px;font-size:14px;color:#222;font-weight:normal;transform:scaleX(0.9246)">50歳-59歳</div>
<div class="ab" style="left:214px;top:443px;width:218px;height:24px;border-radius:4px;background:#bfbfbf;border:1px solid #a6a6a6"></div>
<div class="t" style="left:225.50px;top:448.42px;font-size:14px;color:#222;font-weight:normal;transform:scaleX(0.9246)">60歳-69歳</div>
<div class="ab" style="left:214px;top:471px;width:218px;height:24px;border-radius:4px;background:#bfbfbf;border:1px solid #a6a6a6"></div>
<div class="t" style="left:225.50px;top:476.42px;font-size:14px;color:#222;font-weight:normal;transform:scaleX(0.9031)">70歳以上</div>
<div class="ab" style="left:214px;top:499px;width:218px;height:24px;border-radius:4px;background:#bfbfbf;border:1px solid #a6a6a6"></div>
<div class="t" style="left:225.50px;top:504.42px;font-size:14px;color:#222;font-weight:normal;transform:scaleX(0.9000)">総数</div>
<div class="ab" style="left:203px;top:541px;width:240px;height:393px;background:#fff;border:1.3px solid #8c8c8c"></div>
<div class="t" style="left:213.50px;top:548.42px;font-size:14px;color:#222;font-weight:bold;transform:scaleX(0.9286)">腹囲</div>
<svg class="ab" style="left:368px;top:546px" width="22" height="20" viewBox="0 0 22 20" fill="none" stroke="#333" stroke-width="1.3">
<path d="M1.5 3.5l3 3 4-5M1.5 9.5l3 3 4-5M1.5 15.5l3 3 4-5"/><path d="M10.5 4.5h10M10.5 10.5h10M10.5 16.5h10"/></svg>
<svg class="ab" style="left:406.5px;top:544px" width="24" height="24" viewBox="0 0 24 24" fill="none" stroke-width="1.3">
<path d="M2 2.5h19v3l-6 5.5M9 10.5v12" stroke="#333"/><path d="M2 2.5v3l7 5" stroke="#333"/><path d="M12.5 13.5l8.5 8.5M21 13.5l-8.5 8.5" stroke="#e8383d"/></svg>
<div class="ab" style="left:213px;top:569px;width:219px;height:1.2px;background:#a6a6a6"></div>
<div class="ab" style="left:214px;top:576px;width:191px;height:24px;border-radius:4px;background:#bfbfbf;border:1px solid #a6a6a6"></div>
<div class="t" style="left:225.50px;top:581.42px;font-size:14px;color:#222;font-weight:normal;transform:scaleX(1.0184)">60cm-65cm未満</div>
<div class="ab" style="left:214px;top:604px;width:191px;height:24px;border-radius:4px;background:#bfbfbf;border:1px solid #a6a6a6"></div>
<div class="t" style="left:225.50px;top:609.42px;font-size:14px;color:#222;font-weight:normal;transform:scaleX(1.0184)">65cm-70cm未満</div>
<div class="ab" style="left:214px;top:632px;width:191px;height:24px;border-radius:4px;background:#bfbfbf;border:1px solid #a6a6a6"></div>
<div class="t" style="left:225.50px;top:637.42px;font-size:14px;color:#222;font-weight:normal;transform:scaleX(1.0184)">70cm-75cm未満</div>
<div class="ab" style="left:214px;top:660px;width:191px;height:24px;border-radius:4px;background:#bfbfbf;border:1px solid #a6a6a6"></div>
<div class="t" style="left:225.50px;top:665.42px;font-size:14px;color:#222;font-weight:normal;transform:scaleX(1.0184)">75cm-80cm未満</div>
<div class="ab" style="left:214px;top:688px;width:191px;height:24px;border-radius:4px;background:#bfbfbf;border:1px solid #a6a6a6"></div>
<div class="t" style="left:225.50px;top:693.42px;font-size:14px;color:#222;font-weight:normal;transform:scaleX(1.0184)">80cm-85cm未満</div>
<div class="ab" style="left:214px;top:716px;width:191px;height:24px;border-radius:4px;background:#bfbfbf;border:1px solid #a6a6a6"></div>
<div class="t" style="left:225.50px;top:721.42px;font-size:14px;color:#222;font-weight:normal;transform:scaleX(1.0184)">85cm-90cm未満</div>
<div class="ab" style="left:214px;top:744px;width:191px;height:24px;border-radius:4px;background:#bfbfbf;border:1px solid #a6a6a6"></div>
<div class="t" style="left:225.50px;top:749.42px;font-size:14px;color:#222;font-weight:normal;transform:scaleX(1.0184)">90cm-95cm未満</div>
<div class="ab" style="left:214px;top:772px;width:191px;height:24px;border-radius:4px;background:#bfbfbf;border:1px solid #a6a6a6"></div>
<div class="t" style="left:225.50px;top:777.42px;font-size:14px;color:#222;font-weight:normal;transform:scaleX(1.0191)">95cm-100cm未満</div>
<div class="ab" style="left:214px;top:800px;width:191px;height:24px;border-radius:4px;background:#fff;border:1px solid #dedede"></div>
<div class="t" style="left:225.00px;top:805.42px;font-size:14px;color:#9b9b9b;font-weight:normal;transform:scaleX(1.0278)">（再掲）＜85cm(男)/＜...</div>
<div class="ab" style="left:214px;top:828px;width:191px;height:24px;border-radius:4px;background:#fff;border:1px solid #dedede"></div>
<div class="t" style="left:225.00px;top:833.42px;font-size:14px;color:#9b9b9b;font-weight:normal;transform:scaleX(1.0025)">（再掲）＜90cm</div>
<div class="ab" style="left:214px;top:856px;width:191px;height:24px;border-radius:4px;background:#fff;border:1px solid #dedede"></div>
<div class="t" style="left:225.00px;top:861.42px;font-size:14px;color:#9b9b9b;font-weight:normal;transform:scaleX(1.0830)">（再掲）≧85cm(男)/≧...</div>
<div class="ab" style="left:214px;top:884px;width:191px;height:24px;border-radius:4px;background:#fff;border:1px solid #dedede"></div>
<div class="t" style="left:225.00px;top:889.42px;font-size:14px;color:#9b9b9b;font-weight:normal;transform:scaleX(1.0638)">（再掲）≧90cm</div>
<div class="ab" style="left:410px;top:576px;width:22px;height:347px;background:#efefef"></div>
<div class="ab" style="left:418px;top:736px;width:5px;height:164px;border-radius:2px;background:#7a7a7a"></div>
<div class="ab" style="left:447.0px;top:132.0px;width:1000.0px;height:805.0px;background:#fff;border:1px solid #6e6e6e"></div>
<div class="ab" style="left:1460px;top:131px;width:35px;height:35px;background:#fff;border:1px solid #6e6e6e"></div>
<svg class="ab" style="left:1460px;top:131px" width="35" height="35" viewBox="0 0 35 35" fill="none" stroke="#2e8b57" stroke-width="1.5"><path d="M16.5 6v21M6 16.5h21"/></svg>
<div class="ab" style="left:1460px;top:178px;width:35px;height:35px;background:#fff;border:1px solid #6e6e6e"></div>
<svg class="ab" style="left:1460px;top:178px" width="35" height="35" viewBox="0 0 35 35">
<path d="M15.6 17.2L25.3 9.4Q26.9 8.7 26.4 10.4L18.4 19.4z" fill="#fff" stroke="#333" stroke-width="1"/>
<path d="M17.9 19.6C17.6 22.6 14.6 25.1 10.6 24.6 8.6 24.4 7.1 24.1 5.8 23.5 8.5 22.8 10 21.5 11 19.8 12.2 17.8 15.5 16.6 17.9 19.6Z" fill="#a6d4f7" stroke="#1a6acb" stroke-width="1.1"/>
</svg>
<svg class="ab" style="left:0;top:0;pointer-events:none" width="1920" height="993"><rect x="500" y="645.14" width="817.5" height="1" fill="#d9d9d9"/><rect x="500" y="586.68" width="817.5" height="1" fill="#d9d9d9"/><rect x="500" y="528.22" width="817.5" height="1" fill="#d9d9d9"/><rect x="500" y="469.76" width="817.5" height="1" fill="#d9d9d9"/><rect x="500" y="411.30" width="817.5" height="1" fill="#d9d9d9"/><rect x="500" y="352.84" width="817.5" height="1" fill="#d9d9d9"/><rect x="500" y="294.38" width="817.5" height="1" fill="#d9d9d9"/><rect x="500" y="235.92" width="817.5" height="1" fill="#d9d9d9"/><rect x="503" y="632" width="2" height="72.30" fill="#0b5276"/><rect x="509" y="676" width="2" height="28.30" fill="#0b5276"/><rect x="516" y="690" width="2" height="14.30" fill="#0b5276"/><rect x="522" y="699" width="2" height="5.30" fill="#0b5276"/><rect x="529" y="699" width="2" height="5.30" fill="#0b5276"/><rect x="554" y="703" width="2" height="1.30" fill="#0b5276"/><rect x="560" y="685" width="2" height="19.30" fill="#0b5276"/><rect x="567" y="647" width="2" height="57.30" fill="#0b5276"/><rect x="573" y="569" width="2" height="135.30" fill="#0b5276"/><rect x="580" y="465" width="2" height="239.30" fill="#0b5276"/><rect x="586" y="450" width="2" height="254.30" fill="#0b5276"/><rect x="592" y="498" width="2" height="206.30" fill="#0b5276"/><rect x="599" y="569" width="2" height="135.30" fill="#0b5276"/><rect x="611" y="675" width="2" height="29.30" fill="#0b5276"/><rect x="624" y="696" width="2" height="8.30" fill="#0b5276"/><rect x="656" y="675" width="2" height="29.30" fill="#0b5276"/><rect x="662" y="618" width="2" height="86.30" fill="#0b5276"/><rect x="669" y="474" width="2" height="230.30" fill="#0b5276"/><rect x="675" y="310" width="2" height="394.30" fill="#0b5276"/><rect x="682" y="559" width="2" height="145.30" fill="#0b5276"/><rect x="688" y="590" width="2" height="114.30" fill="#0b5276"/><rect x="694" y="618" width="2" height="86.30" fill="#0b5276"/><rect x="701" y="656" width="2" height="48.30" fill="#0b5276"/><rect x="707" y="656" width="2" height="48.30" fill="#0b5276"/><rect x="714" y="697" width="2" height="7.30" fill="#0b5276"/><rect x="720" y="676" width="2" height="28.30" fill="#0b5276"/><rect x="726" y="697" width="2" height="7.30" fill="#0b5276"/><rect x="752" y="697" width="2" height="7.30" fill="#0b5276"/><rect x="765" y="642" width="2" height="62.30" fill="#0b5276"/><rect x="771" y="552" width="2" height="152.30" fill="#0b5276"/><rect x="777" y="538" width="2" height="166.30" fill="#0b5276"/><rect x="784" y="434" width="2" height="270.30" fill="#0b5276"/><rect x="790" y="524" width="2" height="180.30" fill="#0b5276"/><rect x="796" y="517" width="2" height="187.30" fill="#0b5276"/><rect x="803" y="649" width="2" height="55.30" fill="#0b5276"/><rect x="809" y="652" width="2" height="52.30" fill="#0b5276"/><rect x="816" y="681" width="2" height="23.30" fill="#0b5276"/><rect x="822" y="681" width="2" height="23.30" fill="#0b5276"/><rect x="828" y="692" width="2" height="12.30" fill="#0b5276"/><rect x="835" y="692" width="2" height="12.30" fill="#0b5276"/><rect x="860" y="698" width="2" height="6.30" fill="#0b5276"/><rect x="867" y="669" width="2" height="35.30" fill="#0b5276"/><rect x="873" y="628" width="2" height="76.30" fill="#0b5276"/><rect x="879" y="511" width="2" height="193.30" fill="#0b5276"/><rect x="886" y="452" width="2" height="252.30" fill="#0b5276"/><rect x="892" y="511" width="2" height="193.30" fill="#0b5276"/><rect x="899" y="540" width="2" height="164.30" fill="#0b5276"/><rect x="905" y="576" width="2" height="128.30" fill="#0b5276"/><rect x="911" y="649" width="2" height="55.30" fill="#0b5276"/><rect x="918" y="669" width="2" height="35.30" fill="#0b5276"/><rect x="924" y="684" width="2" height="20.30" fill="#0b5276"/><rect x="937" y="701" width="2" height="3.30" fill="#0b5276"/><rect x="969" y="681" width="2" height="23.30" fill="#0b5276"/><rect x="975" y="629" width="2" height="75.30" fill="#0b5276"/><rect x="981" y="546" width="2" height="158.30" fill="#0b5276"/><rect x="988" y="443" width="2" height="261.30" fill="#0b5276"/><rect x="994" y="459" width="2" height="245.30" fill="#0b5276"/><rect x="1001" y="526" width="2" height="178.30" fill="#0b5276"/><rect x="1007" y="590" width="2" height="114.30" fill="#0b5276"/><rect x="1013" y="632" width="2" height="72.30" fill="#0b5276"/><rect x="1020" y="675" width="2" height="29.30" fill="#0b5276"/><rect x="1026" y="697" width="2" height="7.30" fill="#0b5276"/><rect x="1033" y="701" width="2" height="3.30" fill="#0b5276"/><rect x="1039" y="701" width="2" height="3.30" fill="#0b5276"/><rect x="1071" y="697" width="2" height="7.30" fill="#0b5276"/><rect x="1077" y="664" width="2" height="40.30" fill="#0b5276"/><rect x="1084" y="582" width="2" height="122.30" fill="#0b5276"/><rect x="1090" y="463" width="2" height="241.30" fill="#0b5276"/><rect x="1096" y="417" width="2" height="287.30" fill="#0b5276"/><rect x="1103" y="492" width="2" height="212.30" fill="#0b5276"/><rect x="1109" y="559" width="2" height="145.30" fill="#0b5276"/><rect x="1115" y="631" width="2" height="73.30" fill="#0b5276"/><rect x="1122" y="677" width="2" height="27.30" fill="#0b5276"/><rect x="1128" y="694" width="2" height="10.30" fill="#0b5276"/><rect x="1135" y="699" width="2" height="5.30" fill="#0b5276"/><rect x="1141" y="702" width="2" height="2.30" fill="#0b5276"/><rect x="1167" y="702" width="2" height="2.30" fill="#0b5276"/><rect x="1173" y="688" width="2" height="16.30" fill="#0b5276"/><rect x="1179" y="653" width="2" height="51.30" fill="#0b5276"/><rect x="1186" y="609" width="2" height="95.30" fill="#0b5276"/><rect x="1192" y="473" width="2" height="231.30" fill="#0b5276"/><rect x="1198" y="431" width="2" height="273.30" fill="#0b5276"/><rect x="1205" y="445" width="2" height="259.30" fill="#0b5276"/><rect x="1211" y="579" width="2" height="125.30" fill="#0b5276"/><rect x="1218" y="645" width="2" height="59.30" fill="#0b5276"/><rect x="1224" y="677" width="2" height="27.30" fill="#0b5276"/><rect x="1230" y="690" width="2" height="14.30" fill="#0b5276"/><rect x="1237" y="699" width="2" height="5.30" fill="#0b5276"/><rect x="1243" y="701" width="2" height="3.30" fill="#0b5276"/><rect x="1262" y="703" width="2" height="1.30" fill="#0b5276"/><rect x="1269" y="701" width="2" height="3.30" fill="#0b5276"/><rect x="1275" y="677" width="2" height="27.30" fill="#0b5276"/><rect x="1281" y="626" width="2" height="78.30" fill="#0b5276"/><rect x="1288" y="553" width="2" height="151.30" fill="#0b5276"/><rect x="1294" y="465" width="2" height="239.30" fill="#0b5276"/><rect x="1300" y="463" width="2" height="241.30" fill="#0b5276"/><rect x="1307" y="500" width="2" height="204.30" fill="#0b5276"/><rect x="1313" y="588" width="2" height="116.30" fill="#0b5276"/><rect x="494" y="703.3" width="823.5" height="1.5" fill="#8c8c8c"/><rect x="602.08" y="704" width="1" height="188.5" fill="#d9d9d9"/><rect x="704.16" y="704" width="1" height="188.5" fill="#d9d9d9"/><rect x="806.24" y="704" width="1" height="188.5" fill="#d9d9d9"/><rect x="908.32" y="704" width="1" height="188.5" fill="#d9d9d9"/><rect x="1010.40" y="704" width="1" height="188.5" fill="#d9d9d9"/><rect x="1112.48" y="704" width="1" height="188.5" fill="#d9d9d9"/><rect x="1214.56" y="704" width="1" height="188.5" fill="#d9d9d9"/><rect x="500" y="704" width="1" height="188.5" fill="#d9d9d9"/><rect x="494" y="704" width="1.3" height="188.5" fill="#7f7f7f"/><rect x="1316.3" y="704" width="1.3" height="188.5" fill="#7f7f7f"/><rect x="494" y="891.8" width="823.5" height="1.3" fill="#7f7f7f"/><circle cx="494.6" cy="704" r="2.9" fill="#dff0ff" stroke="#3d8ee6" stroke-width="1.3"/><circle cx="494.6" cy="892.4" r="2.9" fill="#dff0ff" stroke="#3d8ee6" stroke-width="1.3"/><circle cx="1316.9" cy="704" r="2.9" fill="#dff0ff" stroke="#3d8ee6" stroke-width="1.3"/><circle cx="1316.9" cy="892.4" r="2.9" fill="#dff0ff" stroke="#3d8ee6" stroke-width="1.3"/><defs><linearGradient id="fb" x1="0" y1="0" x2="0" y2="1"><stop offset="0" stop-color="#e6e6e6"/><stop offset="1" stop-color="#c3c3c3"/></linearGradient></defs><rect x="460" y="142" width="104" height="21.5" fill="url(#fb)"/><rect x="1337" y="524.2" width="96" height="21.5" fill="url(#fb)"/><rect x="1337" y="547.4" width="96" height="21.5" fill="url(#fb)"/><rect x="460" y="902.1" width="79.70000000000005" height="21.600000000000023" fill="url(#fb)"/><rect x="541" y="902.1" width="67" height="21.600000000000023" fill="url(#fb)"/><path d="M1406.5 536.5h6l-3.0 4z" fill="#333"/><path d="M1412.5 528.5h14l-5 6v7.5h-4v-7.5z" fill="#7a7a7a"/><path d="M1406.5 559.5h6l-3.0 4z" fill="#333"/><path d="M1412.5 551.5h14l-5 6v7.5h-4v-7.5z" fill="#7a7a7a"/><path d="M525.0 910.0h9l-4.5 5z" fill="#333"/><path d="M581.0 914.0h6l-3.0 4z" fill="#333"/><path d="M587 906h14l-5 6v7.5h-4v-7.5z" fill="#7a7a7a"/><rect x="1343" y="580" width="9" height="8" fill="#0b5276"/><rect x="1392" y="901.7" width="18.5" height="22.3" fill="url(#fb)"/><rect x="1412.5" y="901.7" width="18.5" height="22.3" fill="url(#fb)"/><path d="M1396.5 913h10M1401.5 908v10M1417 913h10" stroke="#555" stroke-width="1.6"/><circle cx="447.6" cy="132.6" r="5.8" fill="#fff" stroke="#666" stroke-width="2.1"/><circle cx="946.8" cy="132.6" r="5.8" fill="#fff" stroke="#666" stroke-width="2.1"/><circle cx="1446.9" cy="132.6" r="5.8" fill="#fff" stroke="#666" stroke-width="2.1"/><circle cx="447.6" cy="534.6" r="5.8" fill="#fff" stroke="#666" stroke-width="2.1"/><circle cx="1446.9" cy="534.6" r="5.8" fill="#fff" stroke="#666" stroke-width="2.1"/><circle cx="447.6" cy="936.9" r="5.8" fill="#fff" stroke="#666" stroke-width="2.1"/><circle cx="946.8" cy="936.9" r="5.8" fill="#fff" stroke="#666" stroke-width="2.1"/><circle cx="1446.9" cy="936.9" r="5.8" fill="#fff" stroke="#666" stroke-width="2.1"/></svg>
<div class="t" style="left:463.80px;top:145.56px;font-size:13.5px;color:#000;font-weight:normal;transform:scaleX(1.0130)">合計 / 割合 (%)</div>
<div class="t" style="left:890.50px;top:186.26px;font-size:22px;color:#595959;font-weight:normal;transform:scaleX(0.9644)">2023 - 男性</div>
<div class="t" style="left:464.00px;top:696.28px;font-size:14.5px;color:#595959;font-weight:normal;transform:scaleX(0.9419)">0.0</div>
<div class="t" style="left:464.00px;top:637.82px;font-size:14.5px;color:#595959;font-weight:normal;transform:scaleX(0.9419)">5.0</div>
<div class="t" style="left:457.00px;top:579.37px;font-size:14.5px;color:#595959;font-weight:normal;transform:scaleX(0.9209)">10.0</div>
<div class="t" style="left:457.00px;top:520.90px;font-size:14.5px;color:#595959;font-weight:normal;transform:scaleX(0.9209)">15.0</div>
<div class="t" style="left:457.00px;top:462.44px;font-size:14.5px;color:#595959;font-weight:normal;transform:scaleX(0.9209)">20.0</div>
<div class="t" style="left:457.00px;top:403.99px;font-size:14.5px;color:#595959;font-weight:normal;transform:scaleX(0.9209)">25.0</div>
<div class="t" style="left:457.00px;top:345.53px;font-size:14.5px;color:#595959;font-weight:normal;transform:scaleX(0.9209)">30.0</div>
<div class="t" style="left:457.00px;top:287.06px;font-size:14.5px;color:#595959;font-weight:normal;transform:scaleX(0.9209)">35.0</div>
<div class="t" style="left:457.00px;top:228.61px;font-size:14.5px;color:#595959;font-weight:normal;transform:scaleX(0.9209)">40.0</div>
<div class="t" style="left:1342.00px;top:527.72px;font-size:14px;color:#000;font-weight:normal;transform:scaleX(0.9779)">日付 (年)</div>
<div class="t" style="left:1341.00px;top:550.22px;font-size:14px;color:#000;font-weight:normal;transform:scaleX(0.9464)">性別</div>
<div class="t" style="left:1355.00px;top:577.42px;font-size:14px;color:#595959;font-weight:normal;transform:scaleX(0.9847)">2023 - 男性</div>
<div class="t" style="left:463.90px;top:905.62px;font-size:14px;color:#000;font-weight:normal;transform:scaleX(0.9393)">年齢階級</div>
<div class="t" style="left:544.80px;top:905.62px;font-size:14px;color:#000;font-weight:normal;transform:scaleX(0.9179)">腹囲</div>
<div class="t" style="left:507.30px;top:848.18px;font-size:14.5px;color:#595959;font-weight:normal;transform:scaleX(0.9624)">(再掲)40歳-74</div>
<div class="t" style="left:620.60px;top:848.18px;font-size:14.5px;color:#595959;font-weight:normal;transform:scaleX(0.9718)">20歳-29歳</div>
<div class="t" style="left:722.50px;top:848.18px;font-size:14.5px;color:#595959;font-weight:normal;transform:scaleX(0.9718)">30歳-39歳</div>
<div class="t" style="left:824.60px;top:848.18px;font-size:14.5px;color:#595959;font-weight:normal;transform:scaleX(0.9718)">40歳-49歳</div>
<div class="t" style="left:926.70px;top:848.18px;font-size:14.5px;color:#595959;font-weight:normal;transform:scaleX(0.9718)">50歳-59歳</div>
<div class="t" style="left:1028.80px;top:848.18px;font-size:14.5px;color:#595959;font-weight:normal;transform:scaleX(0.9718)">60歳-69歳</div>
<div class="t" style="left:1134.50px;top:848.18px;font-size:14.5px;color:#595959;font-weight:normal;transform:scaleX(0.9568)">70歳以上</div>
<div class="t" style="left:1251.80px;top:848.18px;font-size:14.5px;color:#595959;font-weight:normal;transform:scaleX(0.9667)">総数</div>
<div class="t" style="left:544.60px;top:873.58px;font-size:14.5px;color:#595959;font-weight:normal;transform:scaleX(0.9267)">歳</div>
<div class="ab" style="left:507.10px;top:713.30px;width:0;height:0;transform:rotate(-90deg);transform-origin:0 0"><div class="t" style="right:0;top:-6.11px;font-size:13px;color:#595959;transform:scaleX(1.0888);transform-origin:100% 50%">100cm-105cm未満</div></div>
<div class="ab" style="left:526.24px;top:713.30px;width:0;height:0;transform:rotate(-90deg);transform-origin:0 0"><div class="t" style="right:0;top:-6.11px;font-size:13px;color:#595959;transform:scaleX(1.0888);transform-origin:100% 50%">115cm-120cm未満</div></div>
<div class="ab" style="left:545.38px;top:713.30px;width:0;height:0;transform:rotate(-90deg);transform-origin:0 0"><div class="t" style="right:0;top:-6.11px;font-size:13px;color:#595959;transform:scaleX(1.0888);transform-origin:100% 50%">50cm未満</div></div>
<div class="ab" style="left:564.52px;top:713.30px;width:0;height:0;transform:rotate(-90deg);transform-origin:0 0"><div class="t" style="right:0;top:-6.11px;font-size:13px;color:#595959;transform:scaleX(1.0888);transform-origin:100% 50%">65cm-70cm未満</div></div>
<div class="ab" style="left:583.66px;top:713.30px;width:0;height:0;transform:rotate(-90deg);transform-origin:0 0"><div class="t" style="right:0;top:-6.11px;font-size:13px;color:#595959;transform:scaleX(1.0888);transform-origin:100% 50%">80cm-85cm未満</div></div>
<div class="ab" style="left:602.80px;top:713.30px;width:0;height:0;transform:rotate(-90deg);transform-origin:0 0"><div class="t" style="right:0;top:-6.11px;font-size:13px;color:#595959;transform:scaleX(1.0888);transform-origin:100% 50%">95cm-100cm未満</div></div>
<div class="ab" style="left:621.94px;top:713.30px;width:0;height:0;transform:rotate(-90deg);transform-origin:0 0"><div class="t" style="right:0;top:-6.11px;font-size:13px;color:#595959;transform:scaleX(1.0888);transform-origin:100% 50%">110cm-115cm未満</div></div>
<div class="ab" style="left:641.08px;top:713.30px;width:0;height:0;transform:rotate(-90deg);transform-origin:0 0"><div class="t" style="right:0;top:-6.11px;font-size:13px;color:#595959;transform:scaleX(1.0888);transform-origin:100% 50%">50cm-55cm未満</div></div>
<div class="ab" style="left:660.22px;top:713.30px;width:0;height:0;transform:rotate(-90deg);transform-origin:0 0"><div class="t" style="right:0;top:-6.11px;font-size:13px;color:#595959;transform:scaleX(1.0888);transform-origin:100% 50%">60cm-65cm未満</div></div>
<div class="ab" style="left:679.36px;top:713.30px;width:0;height:0;transform:rotate(-90deg);transform-origin:0 0"><div class="t" style="right:0;top:-6.11px;font-size:13px;color:#595959;transform:scaleX(1.0888);transform-origin:100% 50%">75cm-80cm未満</div></div>
<div class="ab" style="left:698.50px;top:713.30px;width:0;height:0;transform:rotate(-90deg);transform-origin:0 0"><div class="t" style="right:0;top:-6.11px;font-size:13px;color:#595959;transform:scaleX(1.0888);transform-origin:100% 50%">90cm-95cm未満</div></div>
<div class="ab" style="left:717.64px;top:713.30px;width:0;height:0;transform:rotate(-90deg);transform-origin:0 0"><div class="t" style="right:0;top:-6.11px;font-size:13px;color:#595959;transform:scaleX(1.0888);transform-origin:100% 50%">105cm-110cm未満</div></div>
<div class="ab" style="left:736.78px;top:713.30px;width:0;height:0;transform:rotate(-90deg);transform-origin:0 0"><div class="t" style="right:0;top:-6.11px;font-size:13px;color:#595959;transform:scaleX(1.0888);transform-origin:100% 50%">120cm以上</div></div>
<div class="ab" style="left:755.92px;top:713.30px;width:0;height:0;transform:rotate(-90deg);transform-origin:0 0"><div class="t" style="right:0;top:-6.11px;font-size:13px;color:#595959;transform:scaleX(1.0888);transform-origin:100% 50%">55cm-60cm未満</div></div>
<div class="ab" style="left:775.06px;top:713.30px;width:0;height:0;transform:rotate(-90deg);transform-origin:0 0"><div class="t" style="right:0;top:-6.11px;font-size:13px;color:#595959;transform:scaleX(1.0888);transform-origin:100% 50%">70cm-75cm未満</div></div>
<div class="ab" style="left:794.20px;top:713.30px;width:0;height:0;transform:rotate(-90deg);transform-origin:0 0"><div class="t" style="right:0;top:-6.11px;font-size:13px;color:#595959;transform:scaleX(1.0888);transform-origin:100% 50%">85cm-90cm未満</div></div>
<div class="ab" style="left:813.34px;top:713.30px;width:0;height:0;transform:rotate(-90deg);transform-origin:0 0"><div class="t" style="right:0;top:-6.11px;font-size:13px;color:#595959;transform:scaleX(1.0888);transform-origin:100% 50%">100cm-105cm未満</div></div>
<div class="ab" style="left:832.48px;top:713.30px;width:0;height:0;transform:rotate(-90deg);transform-origin:0 0"><div class="t" style="right:0;top:-6.11px;font-size:13px;color:#595959;transform:scaleX(1.0888);transform-origin:100% 50%">115cm-120cm未満</div></div>
<div class="ab" style="left:851.62px;top:713.30px;width:0;height:0;transform:rotate(-90deg);transform-origin:0 0"><div class="t" style="right:0;top:-6.11px;font-size:13px;color:#595959;transform:scaleX(1.0888);transform-origin:100% 50%">50cm未満</div></div>
<div class="ab" style="left:870.76px;top:713.30px;width:0;height:0;transform:rotate(-90deg);transform-origin:0 0"><div class="t" style="right:0;top:-6.11px;font-size:13px;color:#595959;transform:scaleX(1.0888);transform-origin:100% 50%">65cm-70cm未満</div></div>
<div class="ab" style="left:889.90px;top:713.30px;width:0;height:0;transform:rotate(-90deg);transform-origin:0 0"><div class="t" style="right:0;top:-6.11px;font-size:13px;color:#595959;transform:scaleX(1.0888);transform-origin:100% 50%">80cm-85cm未満</div></div>
<div class="ab" style="left:909.04px;top:713.30px;width:0;height:0;transform:rotate(-90deg);transform-origin:0 0"><div class="t" style="right:0;top:-6.11px;font-size:13px;color:#595959;transform:scaleX(1.0888);transform-origin:100% 50%">95cm-100cm未満</div></div>
<div class="ab" style="left:928.18px;top:713.30px;width:0;height:0;transform:rotate(-90deg);transform-origin:0 0"><div class="t" style="right:0;top:-6.11px;font-size:13px;color:#595959;transform:scaleX(1.0888);transform-origin:100% 50%">110cm-115cm未満</div></div>
<div class="ab" style="left:947.32px;top:713.30px;width:0;height:0;transform:rotate(-90deg);transform-origin:0 0"><div class="t" style="right:0;top:-6.11px;font-size:13px;color:#595959;transform:scaleX(1.0888);transform-origin:100% 50%">50cm-55cm未満</div></div>
<div class="ab" style="left:966.46px;top:713.30px;width:0;height:0;transform:rotate(-90deg);transform-origin:0 0"><div class="t" style="right:0;top:-6.11px;font-size:13px;color:#595959;transform:scaleX(1.0888);transform-origin:100% 50%">60cm-65cm未満</div></div>
<div class="ab" style="left:985.60px;top:713.30px;width:0;height:0;transform:rotate(-90deg);transform-origin:0 0"><div class="t" style="right:0;top:-6.11px;font-size:13px;color:#595959;transform:scaleX(1.0888);transform-origin:100% 50%">75cm-80cm未満</div></div>
<div class="ab" style="left:1004.74px;top:713.30px;width:0;height:0;transform:rotate(-90deg);transform-origin:0 0"><div class="t" style="right:0;top:-6.11px;font-size:13px;color:#595959;transform:scaleX(1.0888);transform-origin:100% 50%">90cm-95cm未満</div></div>
<div class="ab" style="left:1023.88px;top:713.30px;width:0;height:0;transform:rotate(-90deg);transform-origin:0 0"><div class="t" style="right:0;top:-6.11px;font-size:13px;color:#595959;transform:scaleX(1.0888);transform-origin:100% 50%">105cm-110cm未満</div></div>
<div class="ab" style="left:1043.02px;top:713.30px;width:0;height:0;transform:rotate(-90deg);transform-origin:0 0"><div class="t" style="right:0;top:-6.11px;font-size:13px;color:#595959;transform:scaleX(1.0888);transform-origin:100% 50%">120cm以上</div></div>
<div class="ab" style="left:1062.16px;top:713.30px;width:0;height:0;transform:rotate(-90deg);transform-origin:0 0"><div class="t" style="right:0;top:-6.11px;font-size:13px;color:#595959;transform:scaleX(1.0888);transform-origin:100% 50%">55cm-60cm未満</div></div>
<div class="ab" style="left:1081.30px;top:713.30px;width:0;height:0;transform:rotate(-90deg);transform-origin:0 0"><div class="t" style="right:0;top:-6.11px;font-size:13px;color:#595959;transform:scaleX(1.0888);transform-origin:100% 50%">70cm-75cm未満</div></div>
<div class="ab" style="left:1100.44px;top:713.30px;width:0;height:0;transform:rotate(-90deg);transform-origin:0 0"><div class="t" style="right:0;top:-6.11px;font-size:13px;color:#595959;transform:scaleX(1.0888);transform-origin:100% 50%">85cm-90cm未満</div></div>
<div class="ab" style="left:1119.58px;top:713.30px;width:0;height:0;transform:rotate(-90deg);transform-origin:0 0"><div class="t" style="right:0;top:-6.11px;font-size:13px;color:#595959;transform:scaleX(1.0888);transform-origin:100% 50%">100cm-105cm未満</div></div>
<div class="ab" style="left:1138.72px;top:713.30px;width:0;height:0;transform:rotate(-90deg);transform-origin:0 0"><div class="t" style="right:0;top:-6.11px;font-size:13px;color:#595959;transform:scaleX(1.0888);transform-origin:100% 50%">115cm-120cm未満</div></div>
<div class="ab" style="left:1157.86px;top:713.30px;width:0;height:0;transform:rotate(-90deg);transform-origin:0 0"><div class="t" style="right:0;top:-6.11px;font-size:13px;color:#595959;transform:scaleX(1.0888);transform-origin:100% 50%">50cm未満</div></div>
<div class="ab" style="left:1177.00px;top:713.30px;width:0;height:0;transform:rotate(-90deg);transform-origin:0 0"><div class="t" style="right:0;top:-6.11px;font-size:13px;color:#595959;transform:scaleX(1.0888);transform-origin:100% 50%">65cm-70cm未満</div></div>
<div class="ab" style="left:1196.14px;top:713.30px;width:0;height:0;transform:rotate(-90deg);transform-origin:0 0"><div class="t" style="right:0;top:-6.11px;font-size:13px;color:#595959;transform:scaleX(1.0888);transform-origin:100% 50%">80cm-85cm未満</div></div>
<div class="ab" style="left:1215.28px;top:713.30px;width:0;height:0;transform:rotate(-90deg);transform-origin:0 0"><div class="t" style="right:0;top:-6.11px;font-size:13px;color:#595959;transform:scaleX(1.0888);transform-origin:100% 50%">95cm-100cm未満</div></div>
<div class="ab" style="left:1234.42px;top:713.30px;width:0;height:0;transform:rotate(-90deg);transform-origin:0 0"><div class="t" style="right:0;top:-6.11px;font-size:13px;color:#595959;transform:scaleX(1.0888);transform-origin:100% 50%">110cm-115cm未満</div></div>
<div class="ab" style="left:1253.56px;top:713.30px;width:0;height:0;transform:rotate(-90deg);transform-origin:0 0"><div class="t" style="right:0;top:-6.11px;font-size:13px;color:#595959;transform:scaleX(1.0888);transform-origin:100% 50%">50cm-55cm未満</div></div>
<div class="ab" style="left:1272.70px;top:713.30px;width:0;height:0;transform:rotate(-90deg);transform-origin:0 0"><div class="t" style="right:0;top:-6.11px;font-size:13px;color:#595959;transform:scaleX(1.0888);transform-origin:100% 50%">60cm-65cm未満</div></div>
<div class="ab" style="left:1291.84px;top:713.30px;width:0;height:0;transform:rotate(-90deg);transform-origin:0 0"><div class="t" style="right:0;top:-6.11px;font-size:13px;color:#595959;transform:scaleX(1.0888);transform-origin:100% 50%">75cm-80cm未満</div></div>
<div class="ab" style="left:1310.98px;top:713.30px;width:0;height:0;transform:rotate(-90deg);transform-origin:0 0"><div class="t" style="right:0;top:-6.11px;font-size:13px;color:#595959;transform:scaleX(1.0888);transform-origin:100% 50%">90cm-95cm未満</div></div>
<div class="ab" style="left:1502px;top:98px;width:26px;height:895px;background:#e6e9ef"></div>
<div class="ab" style="left:1505px;top:100px;width:21px;height:856px;border-radius:10.5px;background:#f5f5f5"></div>
<svg class="ab" style="left:1509px;top:104px" width="12" height="9" viewBox="0 0 12 9"><path d="M1 8h10L6 1z" fill="#6b6b6b"/></svg>
<div class="ab" style="left:1510px;top:119px;width:11px;height:126px;border-radius:5.5px;background:#737373"></div>
<svg class="ab" style="left:1509px;top:940px" width="12" height="9" viewBox="0 0 12 9"><path d="M1 1h10L6 8z" fill="#6b6b6b"/></svg>
<div class="ab" style="left:37px;top:952px;width:1465px;height:1px;background:#e0e0e0"></div>
<div class="ab" style="left:0;top:953px;width:1528px;height:10px;background:#fff"></div>
<div class="ab" style="left:0;top:953px;width:213px;height:40px;background:#e6e9ef;border-top-right-radius:5px"></div>
<div class="ab" style="left:279px;top:953px;width:1249px;height:40px;background:#e6e9ef;border-top-left-radius:5px"></div>
<div class="ab" style="left:208px;top:980px;width:76px;height:13px;background:#e6e9ef"></div>
<svg class="ab" style="left:30px;top:965px" width="12" height="16" viewBox="0 0 12 16" fill="none" stroke="#8a8a8a" stroke-width="1.3"><path d="M9 1.5L3 8l6 6.5"/></svg>
<svg class="ab" style="left:70px;top:965px" width="12" height="16" viewBox="0 0 12 16" fill="none" stroke="#8a8a8a" stroke-width="1.3"><path d="M3 1.5L9 8l-6 6.5"/></svg>
<div class="t" style="left:152.00px;top:963.71px;font-size:18.7px;color:#333;font-weight:normal;transform:scaleX(1.0309)">data</div>
<div class="ab" style="left:207px;top:962px;width:1px;height:23px;background:#c4c4c4"></div>
<div class="ab" style="left:213px;top:953px;width:66px;height:35px;background:#fff;border-radius:0 0 6px 6px"></div>
<div class="t" style="left:225.50px;top:959.10px;font-size:20px;color:#333;font-weight:normal;transform:scaleX(0.9941)">pivot</div>
<div class="ab" style="left:223px;top:983px;width:46px;height:2.5px;background:#107c41"></div>
<div class="ab" style="left:284px;top:962px;width:1px;height:23px;background:#c4c4c4"></div>
<svg class="ab" style="left:336px;top:964px" width="16" height="16" viewBox="0 0 16 16" stroke="#333" stroke-width="1.6"><path d="M8 1v14M1 8h14"/></svg>
<div class="ab" style="left:919.5px;top:966px;width:2.5px;height:2.5px;background:#333"></div><div class="ab" style="left:919.5px;top:971.5px;width:2.5px;height:2.5px;background:#333"></div><div class="ab" style="left:919.5px;top:977px;width:2.5px;height:2.5px;background:#333"></div>
<div class="ab" style="left:941px;top:962.5px;width:563px;height:21px;border-radius:10px;background:#f3f3f3"></div>
<svg class="ab" style="left:946px;top:966px" width="12" height="14" viewBox="0 0 12 14"><path d="M10 1v12L3 7z" fill="#6b6b6b"/></svg>
<div class="ab" style="left:962px;top:967px;width:453px;height:11.5px;border-radius:6px;background:#737373"></div>
<svg class="ab" style="left:1489px;top:966px" width="12" height="14" viewBox="0 0 12 14"><path d="M2 1v12l7-6z" fill="#6b6b6b"/></svg>
<div class="ab" style="left:1528px;top:98px;width:392px;height:895px;background:#f0f0f0;border-left:1px solid #d6d6d6"></div>
<div class="t" style="left:1543.00px;top:117.61px;font-size:17px;color:#262626;font-weight:bold;transform:scaleX(0.8348)">ピボットグラフのフィールド</div>
<svg class="ab" style="left:1841px;top:119px" width="20" height="12" viewBox="0 0 20 12" fill="none" stroke="#333" stroke-width="1.3"><path d="M1.5 1.5l8.5 8.5 8.5-8.5"/></svg>
<svg class="ab" style="left:1884px;top:118px" width="15" height="15" viewBox="0 0 15 15" fill="none" stroke="#333" stroke-width="1.3"><path d="M1 1l13 13M14 1L1 14"/></svg>
<div class="t" style="left:1544.80px;top:153.78px;font-size:14.5px;color:#262626;font-weight:bold;transform:scaleX(0.7973)">アクティブ</div>
<div class="t" style="left:1634.50px;top:154.19px;font-size:14.5px;color:#262626;font-weight:normal;transform:scaleX(0.7933)">すべて</div>
<div class="ab" style="left:1544px;top:179px;width:62px;height:3px;background:#107c41"></div>
<div class="t" style="left:1544.80px;top:198.69px;font-size:14.5px;color:#262626;font-weight:normal;transform:scaleX(0.7899)">レポートに追加するフィールドを選択してください:</div>
<div class="ab" style="left:1848px;top:187px;width:57px;height:35px;background:#fff;border:1px solid #7f7f7f"></div>
<svg class="ab" style="left:1858px;top:191.7px" width="24" height="24" viewBox="0 0 24 24" fill="none" stroke="#333" stroke-width="1.15">
<path d="M21.75 12.00 L21.70 12.42 L21.56 12.84 L21.32 13.23 L21.00 13.59 L20.56 13.90 L19.87 14.11 L19.18 14.26 L18.73 14.45 L18.37 14.64 L18.08 14.83 L17.84 15.04 L17.67 15.28 L17.56 15.54 L17.49 15.84 L17.47 16.20 L17.49 16.61 L17.55 17.09 L17.76 17.76 L17.93 18.47 L17.87 19.00 L17.73 19.46 L17.50 19.86 L17.22 20.19 L16.88 20.44 L16.48 20.61 L16.06 20.70 L15.60 20.69 L15.12 20.58 L14.64 20.37 L14.11 19.87 L13.63 19.35 L13.24 19.06 L12.90 18.84 L12.58 18.68 L12.29 18.58 L12.00 18.55 L11.71 18.58 L11.42 18.68 L11.10 18.84 L10.76 19.06 L10.37 19.35 L9.89 19.87 L9.36 20.37 L8.88 20.58 L8.40 20.69 L7.94 20.70 L7.52 20.61 L7.13 20.44 L6.78 20.19 L6.50 19.86 L6.27 19.46 L6.13 19.00 L6.07 18.47 L6.24 17.76 L6.45 17.09 L6.51 16.61 L6.53 16.20 L6.51 15.84 L6.44 15.54 L6.33 15.28 L6.16 15.04 L5.92 14.83 L5.63 14.64 L5.27 14.45 L4.82 14.26 L4.13 14.11 L3.44 13.90 L3.00 13.59 L2.68 13.23 L2.44 12.84 L2.30 12.42 L2.25 12.00 L2.30 11.58 L2.44 11.16 L2.68 10.77 L3.00 10.41 L3.44 10.10 L4.13 9.89 L4.82 9.74 L5.27 9.55 L5.63 9.36 L5.92 9.17 L6.16 8.96 L6.33 8.72 L6.44 8.46 L6.51 8.16 L6.53 7.80 L6.51 7.39 L6.45 6.91 L6.24 6.24 L6.07 5.53 L6.13 5.00 L6.27 4.54 L6.50 4.14 L6.78 3.81 L7.12 3.56 L7.52 3.39 L7.94 3.30 L8.40 3.31 L8.88 3.42 L9.36 3.63 L9.89 4.13 L10.37 4.65 L10.76 4.94 L11.10 5.16 L11.42 5.32 L11.71 5.42 L12.00 5.45 L12.29 5.42 L12.58 5.32 L12.90 5.16 L13.24 4.94 L13.63 4.65 L14.11 4.13 L14.64 3.63 L15.12 3.42 L15.60 3.31 L16.06 3.30 L16.48 3.39 L16.87 3.56 L17.22 3.81 L17.50 4.14 L17.73 4.54 L17.87 5.00 L17.93 5.53 L17.76 6.24 L17.55 6.91 L17.49 7.39 L17.47 7.80 L17.49 8.16 L17.56 8.46 L17.67 8.73 L17.84 8.96 L18.08 9.17 L18.37 9.36 L18.73 9.55 L19.18 9.74 L19.87 9.89 L20.56 10.10 L21.00 10.41 L21.32 10.77 L21.56 11.16 L21.70 11.58Z"/><circle cx="12" cy="12" r="3.5"/></svg>
<svg class="ab" style="left:1889px;top:201.7px" width="9" height="6" viewBox="0 0 9 6" fill="none" stroke="#333" stroke-width="1.3"><path d="M1 1l3.5 3.5L8 1"/></svg>
<div class="ab" style="left:1544px;top:239px;width:361px;height:30px;background:#fff;border:1px solid #a6a6a6"></div>
<div class="t" style="left:1552.00px;top:245.69px;font-size:14.5px;color:#7a7a7a;font-weight:normal;transform:scaleX(0.9867)">検索</div>
<svg class="ab" style="left:1879px;top:243px" width="22" height="22" viewBox="0 0 22 22" fill="none" stroke="#333" stroke-width="1.3"><circle cx="13.5" cy="8.5" r="6"/><path d="M9.2 12.8L2 20"/></svg>
<div class="ab" style="left:1544px;top:291px;width:361px;height:252px;background:#fff;border:1px solid #a6a6a6;overflow:hidden"></div>
<div class="ab" style="left:1545px;top:292px;width:338px;height:250px;overflow:hidden">
<svg class="ab" style="left:1px;top:-8px" width="46" height="20" viewBox="0 0 46 20" fill="none" stroke="#444" stroke-width="1.2"><path d="M8 9h7V3"/><rect x="22.5" y="2.5" width="20" height="15"/><path d="M22.5 7.5h20M22.5 12.5h20M29 2.5v15M36 2.5v15"/></svg>
<div class="t" style="left:46px;top:-7px;font-size:17px;font-weight:bold;color:#262626;transform:scaleX(1.034);transform-origin:0 0">_00450_mhlw_00450171_hyo19_...</div>
</div>
<div class="ab" style="left:1592px;top:304.6px;width:16px;height:16px;background:#fff;border:1px solid #7a7a7a"></div>
<div class="t" style="left:1616.00px;top:309.29px;font-size:14.5px;color:#262626;font-weight:normal;transform:scaleX(0.9400)">日付</div>
<div class="ab" style="left:1592px;top:335.7px;width:16px;height:16px;background:#107c41"></div>
<svg class="ab" style="left:1592px;top:335.7px" width="16" height="16" viewBox="0 0 16 16" fill="none" stroke="#fff" stroke-width="1.2"><path d="M4 8l2.8 2.8L12 5"/></svg>
<div class="t" style="left:1616.00px;top:340.37px;font-size:14.5px;color:#262626;font-weight:bold;transform:scaleX(0.9500)">性別</div>
<svg class="ab" style="left:1862px;top:338.2px" width="18" height="17" viewBox="0 0 18 17" fill="none" stroke="#444" stroke-width="1.2"><path d="M1.5 1.5h15v2.5l-5.5 5.5v6.5h-4V9.5L1.5 4z"/></svg>
<div class="ab" style="left:1592px;top:366.8px;width:16px;height:16px;background:#107c41"></div>
<svg class="ab" style="left:1592px;top:366.8px" width="16" height="16" viewBox="0 0 16 16" fill="none" stroke="#fff" stroke-width="1.2"><path d="M4 8l2.8 2.8L12 5"/></svg>
<div class="t" style="left:1616.00px;top:371.44px;font-size:14.5px;color:#262626;font-weight:bold;transform:scaleX(0.9783)">年齢階級</div>
<div class="ab" style="left:1592px;top:397.8px;width:16px;height:16px;background:#107c41"></div>
<svg class="ab" style="left:1592px;top:397.8px" width="16" height="16" viewBox="0 0 16 16" fill="none" stroke="#fff" stroke-width="1.2"><path d="M4 8l2.8 2.8L12 5"/></svg>
<div class="t" style="left:1616.00px;top:402.53px;font-size:14.5px;color:#262626;font-weight:bold;transform:scaleX(0.9500)">腹囲</div>
<svg class="ab" style="left:1862px;top:400.3px" width="18" height="17" viewBox="0 0 18 17" fill="none" stroke="#444" stroke-width="1.2"><path d="M1.5 1.5h15v2.5l-5.5 5.5v6.5h-4V9.5L1.5 4z"/></svg>
<div class="ab" style="left:1592px;top:428.9px;width:16px;height:16px;background:#107c41"></div>
<svg class="ab" style="left:1592px;top:428.9px" width="16" height="16" viewBox="0 0 16 16" fill="none" stroke="#fff" stroke-width="1.2"><path d="M4 8l2.8 2.8L12 5"/></svg>
<div class="t" style="left:1616.00px;top:433.61px;font-size:14.5px;color:#262626;font-weight:bold;transform:scaleX(1.1362)">割合 (%)</div>
<div class="ab" style="left:1592px;top:460.0px;width:16px;height:16px;background:#107c41"></div>
<svg class="ab" style="left:1592px;top:460.0px" width="16" height="16" viewBox="0 0 16 16" fill="none" stroke="#fff" stroke-width="1.2"><path d="M4 8l2.8 2.8L12 5"/></svg>
<div class="t" style="left:1616.00px;top:464.69px;font-size:14.5px;color:#262626;font-weight:bold;transform:scaleX(1.0564)">日付 (年)</div>
<svg class="ab" style="left:1862px;top:462.5px" width="18" height="17" viewBox="0 0 18 17" fill="none" stroke="#444" stroke-width="1.2"><path d="M1.5 1.5h15v2.5l-5.5 5.5v6.5h-4V9.5L1.5 4z"/></svg>
<div class="ab" style="left:1592px;top:491.1px;width:16px;height:16px;background:#fff;border:1px solid #7a7a7a"></div>
<div class="t" style="left:1616.00px;top:495.77px;font-size:14.5px;color:#262626;font-weight:normal;transform:scaleX(1.0396)">日付 (四半期)</div>
<div class="ab" style="left:1592px;top:522.2px;width:16px;height:16px;background:#fff;border:1px solid #7a7a7a"></div>
<div class="t" style="left:1616.00px;top:526.85px;font-size:14.5px;color:#262626;font-weight:normal;transform:scaleX(1.0564)">日付 (月)</div>
<div class="ab" style="left:1883px;top:292px;width:21px;height:250px;background:#f3f3f3"></div>
<svg class="ab" style="left:1887px;top:297px" width="12" height="9" viewBox="0 0 12 9"><path d="M1 8h10L6 1z" fill="#6b6b6b"/></svg>
<div class="ab" style="left:1888px;top:321px;width:11px;height:185px;background:#7a7a7a"></div>
<svg class="ab" style="left:1887px;top:527px" width="12" height="9" viewBox="0 0 12 9"><path d="M1 1h10L6 8z" fill="#6b6b6b"/></svg>
<div class="ab" style="left:1546px;top:562px;width:364px;height:0;border-top:1px dotted #b3b3b3"></div>
<div class="t" style="left:1549.40px;top:570.88px;font-size:14.5px;color:#262626;font-weight:normal;transform:scaleX(0.7466)">次のボックス間でフィールドをドラッグしてください:</div>
<svg class="ab" style="left:1552px;top:611px" width="15" height="15" viewBox="0 0 15 15"><path d="M1 1h13l-4.5 5v8h-4V6z" fill="#7a7a7a"/></svg>
<div class="t" style="left:1576.50px;top:612.78px;font-size:14.5px;color:#262626;font-weight:normal;transform:scaleX(0.6787)">フィルター</div>
<div class="ab" style="left:1548px;top:634px;width:171px;height:125px;background:#fff"></div>
<div class="ab" style="left:1726px;top:608px;width:1px;height:152px;background:#c4c4c4"></div>
<svg class="ab" style="left:1735px;top:612px" width="12" height="14" viewBox="0 0 12 14"><rect x="1" y="1" width="2" height="12" fill="#7a7a7a"/><rect x="4.3" y="1" width="1.5" height="12" fill="#9a9a9a"/><rect x="7" y="1" width="1.5" height="12" fill="#9a9a9a"/><rect x="9.7" y="1" width="1.5" height="12" fill="#9a9a9a"/></svg>
<div class="t" style="left:1756.60px;top:612.78px;font-size:14.5px;color:#262626;font-weight:normal;transform:scaleX(1.0762)">凡例 (系列)</div>
<div class="ab" style="left:1729px;top:634px;width:177px;height:125px;background:#fff"></div>
<div class="ab" style="left:1730px;top:636px;width:175px;height:27px;background:#fff;border:1px solid #b3b3b3"></div>
<div class="t" style="left:1741.00px;top:642.68px;font-size:14.5px;color:#262626;font-weight:normal;transform:scaleX(1.0684)">日付 (年)</div>
<svg class="ab" style="left:1886px;top:647px" width="9" height="6" viewBox="0 0 9 6" fill="none" stroke="#333" stroke-width="1.3"><path d="M1 1l3.5 3.5L8 1"/></svg>
<div class="ab" style="left:1730px;top:665px;width:175px;height:27px;background:#fff;border:1px solid #b3b3b3"></div>
<div class="t" style="left:1741.00px;top:671.68px;font-size:14.5px;color:#262626;font-weight:normal;transform:scaleX(0.9333)">性別</div>
<svg class="ab" style="left:1886px;top:676px" width="9" height="6" viewBox="0 0 9 6" fill="none" stroke="#333" stroke-width="1.3"><path d="M1 1l3.5 3.5L8 1"/></svg>
<div class="ab" style="left:1548px;top:766px;width:358px;height:1px;background:#c4c4c4"></div>
<div class="ab" style="left:1726px;top:767px;width:1px;height:158px;background:#c4c4c4"></div>
<svg class="ab" style="left:1553px;top:778px" width="14" height="12" viewBox="0 0 14 12"><rect x="1" y="1" width="12" height="2" fill="#7a7a7a"/><rect x="1" y="4.3" width="12" height="1.5" fill="#9a9a9a"/><rect x="1" y="7" width="12" height="1.5" fill="#9a9a9a"/><rect x="1" y="9.7" width="12" height="1.5" fill="#9a9a9a"/></svg>
<div class="t" style="left:1575.80px;top:778.48px;font-size:14.5px;color:#262626;font-weight:normal;transform:scaleX(1.0576)">軸 (分類項目)</div>
<div class="t" style="left:1734.50px;top:776.95px;font-size:15px;color:#7a7a7a;font-weight:normal;transform:scaleX(1.5084)">Σ</div>
<div class="t" style="left:1757.00px;top:778.48px;font-size:14.5px;color:#262626;font-weight:normal;transform:scaleX(1.0067)">値</div>
<div class="ab" style="left:1548px;top:800px;width:171px;height:125px;background:#fff"></div>
<div class="ab" style="left:1729px;top:800px;width:177px;height:125px;background:#fff"></div>
<div class="ab" style="left:1549px;top:802px;width:169px;height:27px;background:#fff;border:1px solid #b3b3b3"></div>
<div class="t" style="left:1560.00px;top:808.68px;font-size:14.5px;color:#262626;font-weight:normal;transform:scaleX(0.9867)">年齢階級</div>
<svg class="ab" style="left:1699px;top:813px" width="9" height="6" viewBox="0 0 9 6" fill="none" stroke="#333" stroke-width="1.3"><path d="M1 1l3.5 3.5L8 1"/></svg>
<div class="ab" style="left:1549px;top:831px;width:169px;height:27px;background:#fff;border:1px solid #b3b3b3"></div>
<div class="t" style="left:1560.00px;top:837.68px;font-size:14.5px;color:#262626;font-weight:normal;transform:scaleX(0.9567)">腹囲</div>
<svg class="ab" style="left:1699px;top:842px" width="9" height="6" viewBox="0 0 9 6" fill="none" stroke="#333" stroke-width="1.3"><path d="M1 1l3.5 3.5L8 1"/></svg>
<div class="ab" style="left:1730px;top:802px;width:175px;height:27px;background:#fff;border:1px solid #b3b3b3"></div>
<div class="t" style="left:1741.00px;top:808.68px;font-size:14.5px;color:#262626;font-weight:normal;transform:scaleX(1.1077)">合計 / 割合 (%)</div>
<svg class="ab" style="left:1886px;top:813px" width="9" height="6" viewBox="0 0 9 6" fill="none" stroke="#333" stroke-width="1.3"><path d="M1 1l3.5 3.5L8 1"/></svg>
<div class="ab" style="left:1552px;top:958px;width:16px;height:16px;background:#fff;border:1px solid #6b6b6b;border-radius:2px"></div>
<div class="t" style="left:1575.80px;top:959.58px;font-size:14.5px;color:#262626;font-weight:normal;transform:scaleX(0.8303)">レイアウトの更新を保留する</div>
<div class="ab" style="left:1862px;top:950.5px;width:43.5px;height:30px;border:1px solid #d9d9d9"></div>
<div class="t" style="left:1870.20px;top:959.58px;font-size:14.5px;color:#a6a6a6;font-weight:normal;transform:scaleX(0.9533)">更新</div>
</body></html>
